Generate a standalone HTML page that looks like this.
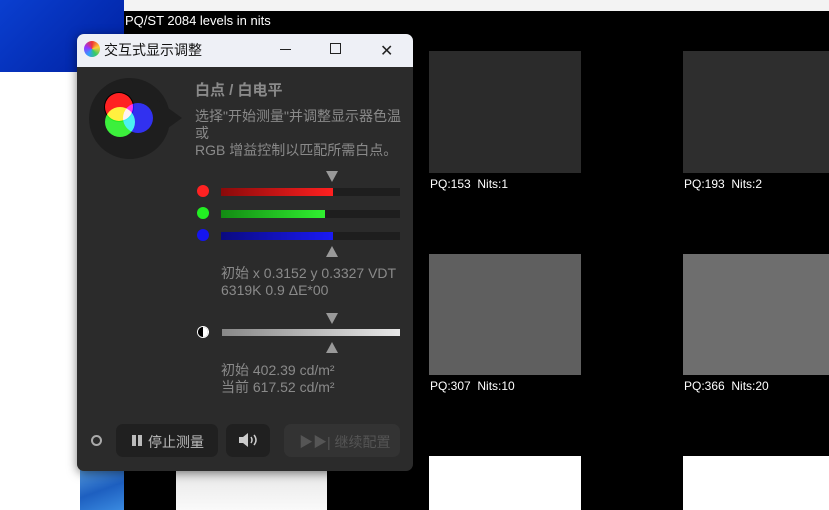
<!DOCTYPE html>
<html><head><meta charset="utf-8"><style>
body{margin:0;width:829px;height:510px;overflow:hidden;position:relative;background:#000;font-family:"Liberation Sans","Noto Sans CJK SC",sans-serif}
.a{position:absolute}
.lbl{position:absolute;color:#fff;font-size:12px}
.t{color:#8a8a8a;font-size:14px;line-height:17px}
</style></head><body>
<div class="a" style="left:0;top:0;width:124px;height:72px;background:linear-gradient(135deg,#0a3fd0,#0020a0)"></div>
<div class="a" style="left:0;top:72px;width:124px;height:438px;background:#fff"></div>
<div class="a" style="left:80px;top:456px;width:44px;height:54px;background:linear-gradient(160deg,#6ab0e8,#1d5fc0 60%,#3a8ae0)"></div>
<div class="a" style="left:124px;top:0;width:705px;height:11px;background:#f3f3f3"></div>
<div class="lbl" style="left:125px;top:13px;font-size:13px">PQ/ST 2084 levels in nits</div>
<div class="a" style="left:429px;top:51px;width:152px;height:122px;background:#2b2b2b"></div>
<div class="a" style="left:683px;top:51px;width:146px;height:122px;background:#2e2e2e"></div>
<div class="lbl" style="left:430px;top:177px">PQ:153&nbsp; Nits:1</div>
<div class="lbl" style="left:684px;top:177px">PQ:193&nbsp; Nits:2</div>
<div class="a" style="left:429px;top:254px;width:152px;height:121px;background:#5f5f5f"></div>
<div class="a" style="left:683px;top:254px;width:146px;height:121px;background:#6e6e6e"></div>
<div class="lbl" style="left:430px;top:379px">PQ:307&nbsp; Nits:10</div>
<div class="lbl" style="left:684px;top:379px">PQ:366&nbsp; Nits:20</div>
<div class="a" style="left:429px;top:456px;width:152px;height:54px;background:#fff"></div>
<div class="a" style="left:683px;top:456px;width:146px;height:54px;background:#fff"></div>
<div class="a" style="left:176px;top:456px;width:151px;height:54px;background:linear-gradient(#e0e0e0,#fafafa)"></div>

<div class="a" style="left:77px;top:34px;width:336px;height:437px;background:#2b2b2b;border-radius:7px;overflow:hidden;box-shadow:0 2px 10px rgba(0,0,0,.5)">
 <div class="a" style="left:0;top:0;width:336px;height:33px;background:#eef0f6"></div>
 <div class="a" style="left:7px;top:7px;width:16px;height:16px;border-radius:50%;background:conic-gradient(#e33,#fc3,#3c6,#39f,#93f,#e33)"></div>
 <div class="a" style="left:27px;top:6px;font-size:14px;color:#111">交互式显示调整</div>
 <div class="a" style="left:203px;top:15px;width:11px;height:1px;background:#222"></div>
 <div class="a" style="left:253px;top:9px;width:9px;height:9px;border:1px solid #222"></div>
 <div class="a" style="left:303px;top:7px;font-size:16px;color:#222">✕</div>
 <div class="a" style="left:12px;top:44px;width:81px;height:81px;border-radius:50%;background:#1e1e1e"></div>
 <div class="a" style="left:80px;top:66px;width:0;height:0;border-top:18px solid transparent;border-bottom:18px solid transparent;border-left:25px solid #1e1e1e"></div>
 <div class="a" style="left:28px;top:59px;width:28px;height:28px;border-radius:50%;background:#f22;box-shadow:0 0 0 1px #000"></div>
 <div class="a" style="left:46px;top:69px;width:30px;height:30px;border-radius:50%;background:#1515ee;mix-blend-mode:screen;box-shadow:0 0 0 1px #000"></div>
 <div class="a" style="left:28px;top:73px;width:30px;height:30px;border-radius:50%;background:#2e2;mix-blend-mode:screen"></div>
 <div class="a" style="left:118px;top:45px;font-size:15px;font-weight:bold;color:#8a8a8a">白点 / 白电平</div>
 <div class="a t" style="left:118px;top:74px;width:215px">选择"开始测量"并调整显示器色温<br>或<br>RGB 增益控制以匹配所需白点。</div>
 <div class="a" style="left:249px;top:137px;border-left:6px solid transparent;border-right:6px solid transparent;border-top:11px solid #999"></div>
 <div class="a" style="left:120px;top:151px;width:12px;height:12px;border-radius:50%;background:#f22"></div>
 <div class="a" style="left:144px;top:154px;width:179px;height:8px;background:#1e1e1e"></div>
 <div class="a" style="left:144px;top:154px;width:112px;height:8px;background:linear-gradient(90deg,#8a0a0a,#ff2020)"></div>
 <div class="a" style="left:120px;top:173px;width:12px;height:12px;border-radius:50%;background:#2e2"></div>
 <div class="a" style="left:144px;top:176px;width:179px;height:8px;background:#1e1e1e"></div>
 <div class="a" style="left:144px;top:176px;width:104px;height:8px;background:linear-gradient(90deg,#138a13,#30f030)"></div>
 <div class="a" style="left:120px;top:195px;width:12px;height:12px;border-radius:50%;background:#1515ee"></div>
 <div class="a" style="left:144px;top:198px;width:179px;height:8px;background:#1e1e1e"></div>
 <div class="a" style="left:144px;top:198px;width:112px;height:8px;background:linear-gradient(90deg,#0a0a80,#1a1af5)"></div>
 <div class="a" style="left:249px;top:212px;border-left:6px solid transparent;border-right:6px solid transparent;border-bottom:11px solid #999"></div>
 <div class="a t" style="left:144px;top:231px">初始 x 0.3152 y 0.3327 VDT<br>6319K 0.9 ΔE*00</div>
 <div class="a" style="left:249px;top:279px;border-left:6px solid transparent;border-right:6px solid transparent;border-top:11px solid #999"></div>
 <div class="a" style="left:121px;top:293px;width:10px;height:10px;border-radius:50%;background:linear-gradient(90deg,#000 50%,#fff 50%);box-shadow:0 0 0 1px #fff"></div>
 <div class="a" style="left:145px;top:295px;width:178px;height:7px;background:linear-gradient(90deg,#888,#e8e8e8)"></div>
 <div class="a" style="left:249px;top:308px;border-left:6px solid transparent;border-right:6px solid transparent;border-bottom:11px solid #999"></div>
 <div class="a t" style="left:144px;top:328px">初始 402.39 cd/m²<br>当前 617.52 cd/m²</div>
 <div class="a" style="left:14px;top:401px;width:7px;height:7px;border-radius:50%;border:2px solid #aaa"></div>
 <div class="a" style="left:39px;top:390px;width:102px;height:33px;background:#202020;border-radius:7px"></div>
 <div class="a" style="left:55px;top:401px;width:4px;height:11px;background:#bbb"></div>
 <div class="a" style="left:61px;top:401px;width:4px;height:11px;background:#bbb"></div>
 <div class="a" style="left:71px;top:398px;font-size:14px;color:#bbb">停止测量</div>
 <div class="a" style="left:149px;top:390px;width:44px;height:33px;background:#202020;border-radius:7px"></div>
 <svg class="a" style="left:161px;top:398px" width="22" height="16" viewBox="0 0 22 16"><path d="M1 5h4l5-4v14l-5-4H1z" fill="#ccc"/><path d="M13 5q2 3 0 6M16 3q4 5 0 10" stroke="#ccc" stroke-width="1.5" fill="none"/></svg>
 <div class="a" style="left:207px;top:390px;width:116px;height:33px;background:#333;border-radius:7px"></div>
 <div class="a" style="left:222px;top:398px;font-size:14px;color:#555">▶▶| 继续配置</div>
</div>
</body></html>
